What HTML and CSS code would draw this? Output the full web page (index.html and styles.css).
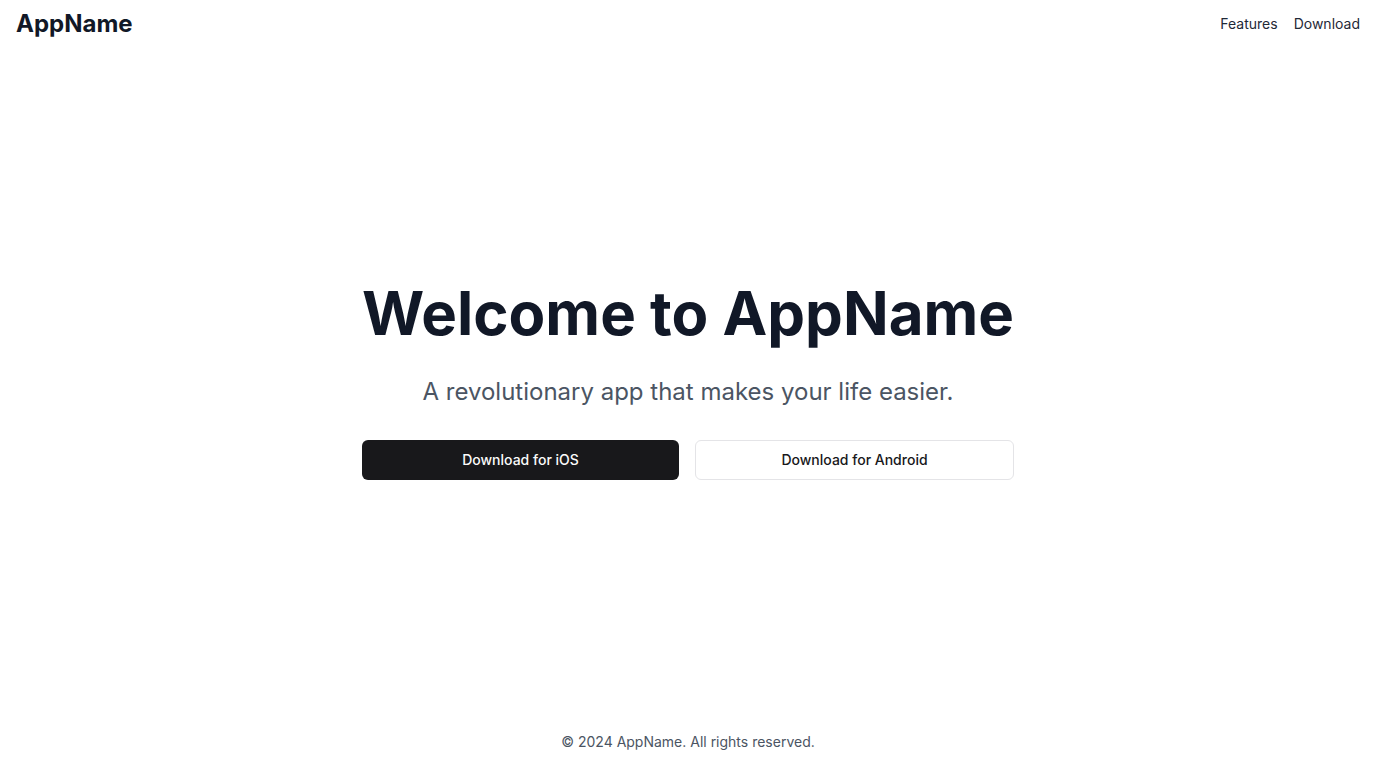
FILE: index.html
```html
<!DOCTYPE html>
<html lang="en">
<head>
<meta charset="utf-8">
<title>AppName</title>
<link rel="stylesheet" href="styles.css">
</head>
<body>
<div class="page">
  <header class="header">
    <a class="logo" href="#">AppName</a>
    <nav class="nav">
      <a href="#">Features</a>
      <a href="#">Download</a>
    </nav>
  </header>
  <main class="main">
    <section class="hero">
      <h1 class="title">Welcome to AppName</h1>
      <p class="subtitle">A revolutionary app that makes your life easier.</p>
      <div class="actions">
        <a class="btn btn-dark" href="#">Download for iOS</a>
        <a class="btn btn-light" href="#">Download for Android</a>
      </div>
    </section>
  </main>
  <footer class="footer">© 2024 AppName. All rights reserved.</footer>
</div>
</body>
</html>
```

FILE: styles.css
```css
* { box-sizing: border-box; }
html, body { margin: 0; padding: 0; }
body {
  font-family: Inter, "Noto Sans", sans-serif;
  color: #111827;
  background: #fff;
}
a { color: inherit; text-decoration: none; }
.page {
  min-height: 768px;
  display: flex;
  flex-direction: column;
}
.header {
  height: 46px;
  padding: 0 16px;
  display: flex;
  align-items: center;
  justify-content: space-between;
}
.logo {
  font-weight: 700;
  font-size: 24px;
  color: #111827;
}
.nav {
  display: flex;
  gap: 16px;
  font-size: 14px;
  color: #1f2937;
}
.main {
  flex: 1;
  display: flex;
  align-items: center;
  justify-content: center;
}
.hero {
  width: 652px;
  text-align: center;
}
.title {
  margin: 0;
  font-size: 60px;
  font-weight: 700;
  line-height: 1;
  color: #111827;
}
.subtitle {
  margin: 34px 0 0;
  font-size: 24px;
  color: #4b5563;
}
.actions {
  margin-top: 34px;
  display: flex;
  gap: 16px;
}
.btn {
  flex: 1;
  height: 40px;
  border-radius: 6px;
  display: flex;
  align-items: center;
  justify-content: center;
  font-size: 14px;
  font-weight: 500;
}
.btn-dark {
  background: #18181b;
  color: #fafafa;
}
.btn-light {
  background: #fff;
  border: 1px solid #e4e4e7;
  color: #18181b;
}
.footer {
  padding: 16px 0;
  line-height: 20px;
  text-align: center;
  font-size: 14px;
  color: #4b5563;
}
```
